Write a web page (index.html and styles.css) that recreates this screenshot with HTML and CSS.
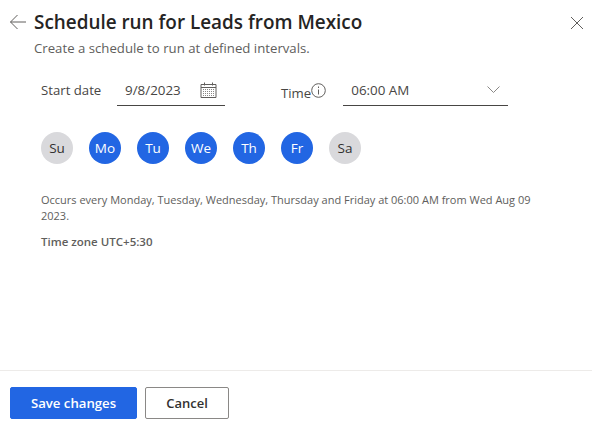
FILE: index.html
```html
<!DOCTYPE html>
<html lang="en">
<head>
  <meta charset="UTF-8">
  <title>Schedule run</title>
  <link rel="stylesheet" href="styles.css">
</head>
<body>
  <div class="panel">
    <div class="content">
      <div class="header">
        <svg class="back" width="18" height="16" viewBox="0 0 18 16"><path d="M17 8H1.500M8.500 1L1.500 8l7 7" fill="none" stroke="#605e5c" stroke-width="1"/></svg>
        <h1>Schedule run for Leads from Mexico</h1>
        <svg class="close" width="14" height="14" viewBox="0 0 14 14"><path d="M1 1l12 12M13 1L1 13" fill="none" stroke="#605e5c" stroke-width="1"/></svg>
      </div>
      <p class="subtitle">Create a schedule to run at defined intervals.</p>

      <div class="fields">
        <span class="label">Start date</span>
        <div class="input date">
          <span>9/8/2023</span>
          <svg width="17" height="16" viewBox="0 0 17 16">
            <path d="M1 2.500h15v13H1zM1 5.500h15" fill="none" stroke="#605e5c"/>
            <path d="M4.500 0.500v3M12.500 0.500v3" fill="none" stroke="#605e5c"/>
            <path d="M3 7.500h11M3 9.500h11M3 11.500h11M3 13.500h11" fill="none" stroke="#8a8886" stroke-dasharray="1 1"/>
          </svg>
        </div>
        <span class="label time-label">Time</span>
        <svg class="info" width="15" height="15" viewBox="0 0 15 15">
          <circle cx="7.500" cy="7.500" r="6.800" fill="none" stroke="#605e5c"/>
          <path d="M7.500 6.500v5M7.500 3.500v1.500" fill="none" stroke="#605e5c"/>
        </svg>
        <div class="input time">
          <span>06:00 AM</span>
          <svg width="13" height="7" viewBox="0 0 13 7"><path d="M.5.500l6 6 6-6" fill="none" stroke="#8a8886"/></svg>
        </div>
      </div>

      <div class="days">
        <span class="day">Su</span>
        <span class="day on">Mo</span>
        <span class="day on">Tu</span>
        <span class="day on">We</span>
        <span class="day on">Th</span>
        <span class="day on">Fr</span>
        <span class="day">Sa</span>
      </div>

      <p class="summary">Occurs every Monday, Tuesday, Wednesday, Thursday and Friday at 06:00 AM from Wed Aug 09 2023.</p>
      <p class="zone">Time zone UTC+5:30</p>
    </div>

    <div class="footer">
      <button class="btn primary">Save changes</button>
      <button class="btn">Cancel</button>
    </div>
  </div>
</body>
</html>
```

FILE: styles.css
```css
html, body {
  height: 100%;
}
body {
  margin: 0;
  background-color: #fff;
  color: #323130;
  font-family: "Open Sans", "Noto Sans", sans-serif;
}
.panel {
  height: 100%;
  display: flex;
  flex-direction: column;
}
.content {
  flex: 1;
  padding: 8px 8px 0 9px;
}
.header {
  display: flex;
  align-items: center;
  height: 28px;
}
.back {
  margin-right: 7px;
}
h1 {
  flex: 1;
  margin: 0;
  font-size: 18.9px;
  font-weight: 600;
  color: #252423;
}
.close {
  margin-top: 2px;
}
.subtitle {
  margin: 3px 0 0 25px;
  font-size: 13.2px;
  line-height: 18px;
  color: #605e5c;
}
.fields {
  display: flex;
  align-items: center;
  margin: 13px 0 0 32px;
  height: 36px;
}
.label {
  font-size: 13.2px;
  width: 76px;
  margin-top: 4px;
  color: #484644;
}
.input {
  display: flex;
  align-items: center;
  justify-content: space-between;
  box-sizing: border-box;
  height: 36px;
  padding-top: 4px;
  border-bottom: 1px solid #484644;
  font-size: 13.4px;
  color: #484644;
}
.date {
  width: 108px;
  padding-left: 8px;
  padding-right: 8px;
}
.time-label {
  width: auto;
  margin: 10px 0 0 56px;
}
.info {
  margin: 4px 17px 0 0;
}
.time {
  width: 165px;
  padding-left: 8px;
  padding-right: 8px;
}
.days {
  display: flex;
  gap: 16px;
  margin: 26px 0 0 32px;
}
.day {
  display: flex;
  align-items: center;
  justify-content: center;
  width: 32px;
  height: 32px;
  border-radius: 50%;
  background-color: #d9d9dc;
  font-size: 13.5px;
}
.day.on {
  background-color: #2266e3;
  color: #fff;
}
.summary {
  max-width: 510px;
  margin: 28px 0 0 32px;
  font-size: 11px;
  line-height: 16px;
  color: #605e5c;
}
.zone {
  margin: 10px 0 0 32px;
  font-size: 11.5px;
  line-height: 16px;
  font-weight: 600;
  color: #605e5c;
}
.footer {
  display: flex;
  gap: 8px;
  height: 62px;
  padding-top: 16px;
  box-sizing: border-box;
  padding-left: 10px;
  border-top: 1px solid #edebe9;
}
.btn {
  width: 84px;
  height: 32px;
  border: 1px solid #8a8886;
  border-radius: 2px;
  background-color: #fff;
  color: #323130;
  font-family: inherit;
  font-size: 13px;
  font-weight: 600;
}
.btn.primary {
  width: 127px;
  border-color: #2266e3;
  background-color: #2266e3;
  color: #fff;
  font-size: 13.2px;
}
```
